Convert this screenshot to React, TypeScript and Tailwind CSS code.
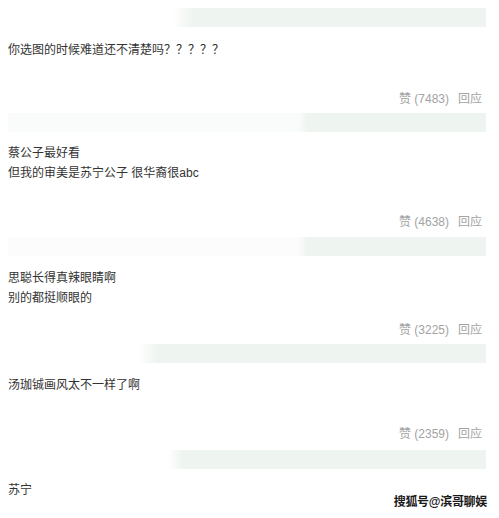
import React from "react";

interface Comment {
  lines: string[];
  likes: number;
  textGap: string;
  likeGap: string;
  barGap: string;
  barFade: string;
}

const comments: Comment[] = [
  {
    lines: ["你选图的时候难道还不清楚吗？？？？？"],
    likes: 7483,
    barGap: "mt-0",
    barFade:
      "bg-[linear-gradient(to_right,#ffffff_0px,#ffffff_165px,#eef4f0_185px)]",
    textGap: "mt-[13px]",
    likeGap: "mt-[29px]",
  },
  {
    lines: ["蔡公子最好看", "但我的审美是苏宁公子 很华裔很abc"],
    likes: 4638,
    barGap: "mt-[4px]",
    barFade:
      "bg-[linear-gradient(to_right,#fafcfb_0px,#fafcfb_290px,#eef4f0_300px)]",
    textGap: "mt-[11px]",
    likeGap: "mt-[29px]",
  },
  {
    lines: ["思聪长得真辣眼睛啊", "别的都挺顺眼的"],
    likes: 3225,
    barGap: "mt-[5px]",
    barFade:
      "bg-[linear-gradient(to_right,#fbfcfb_0px,#fbfcfb_290px,#eef4f0_300px)]",
    textGap: "mt-[12px]",
    likeGap: "mt-[12px]",
  },
  {
    lines: ["汤珈铖画风太不一样了啊"],
    likes: 2359,
    barGap: "mt-[4px]",
    barFade:
      "bg-[linear-gradient(to_right,#ffffff_0px,#ffffff_130px,#eef4f0_150px)]",
    textGap: "mt-[12px]",
    likeGap: "mt-[29px]",
  },
];

const Bar = ({ className }: { className: string }) => (
  <div className={`h-[19px] w-[478px] ${className}`}></div>
);

export default function App() {
  return (
    <div
      className="relative w-[499px] h-[518px] overflow-hidden bg-white pt-[8px] pl-[8px] text-[12px] leading-[20px] text-[#333]"
      style={{ fontFamily: '"Liberation Sans", "Noto Sans CJK SC", sans-serif' }}
    >
      {comments.map((c) => (
        <div key={c.likes}>
          <Bar className={`${c.barGap} ${c.barFade}`} />
          <div className={c.textGap}>
            {c.lines.map((line) => (
              <div key={line}>{line}</div>
            ))}
          </div>
          <div
            className={`${c.likeGap} flex justify-end gap-[9px] w-[474px] text-[#a3a3a3]`}
          >
            <span>赞 ({c.likes})</span>
            <span>回应</span>
          </div>
        </div>
      ))}

      {/* last comment */}
      <Bar className="mt-[6px] bg-[linear-gradient(to_right,#ffffff_0px,#ffffff_160px,#eef4f0_175px)]" />
      <div className="mt-[11px]">苏宁</div>

      {/* watermark */}
      <div className="absolute right-[12px] bottom-[6px] text-[12px] font-bold tracking-[-0.3px] text-[#1a1a1a] [text-shadow:0_0_2px_#fff]">
        搜狐号@滨哥聊娱
      </div>
    </div>
  );
}
